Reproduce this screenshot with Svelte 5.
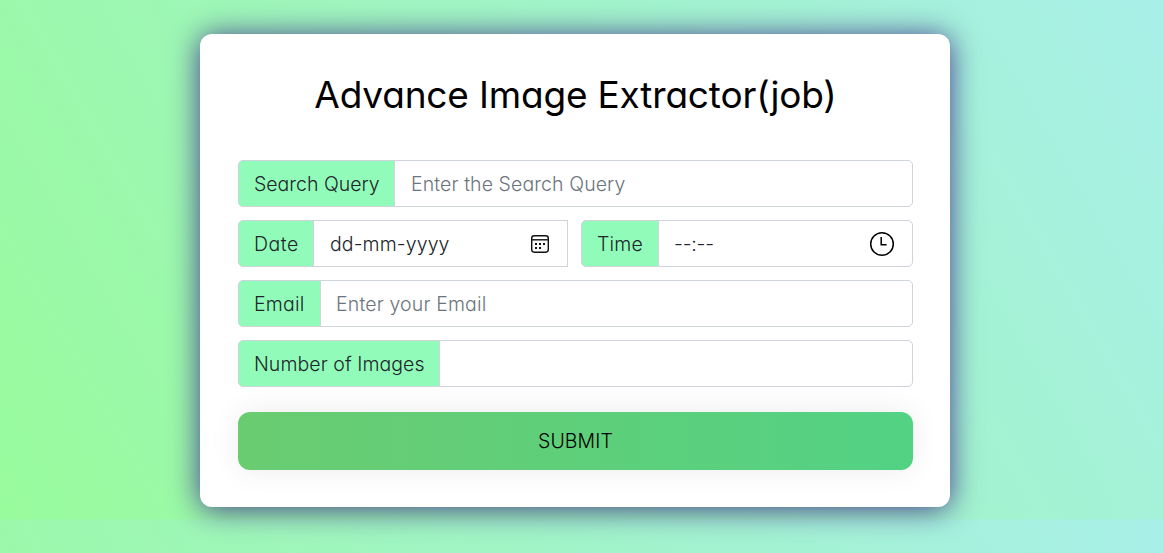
<script>
  let query = $state('');
  let email = $state('');
  let count = $state('');
</script>

<main class="page">
  <form class="card" onsubmit={(e) => e.preventDefault()}>
    <h1>Advance Image Extractor(job)</h1>

    <div class="group">
      <label class="tag w-query" for="query">Search Query</label>
      <input id="query" class="field" placeholder="Enter the Search Query" bind:value={query} />
    </div>

    <div class="row">
      <div class="group">
        <span class="tag w-date">Date</span>
        <div class="field square picker">
          <span>dd-mm-yyyy</span>
          <svg class="calendar" width="20" height="20" viewBox="0 0 20 20" fill="none" stroke="#111">
            <rect x="1.7" y="1.8" width="16.6" height="16.4" rx="2.6" stroke-width="1.4" />
            <path d="M1.7 5.8h16.6" stroke-width="1.4" />
            <path d="M5 10h2m2 0h2m2 0h2M5 14h2m2 0h2" stroke-width="2" />
          </svg>
        </div>
      </div>
      <div class="group">
        <span class="tag w-time">Time</span>
        <div class="field picker time">
          <span>--:--</span>
          <svg class="clock" width="26" height="26" viewBox="0 0 26 26" fill="none" stroke="#000">
            <circle cx="13" cy="13" r="11.3" stroke-width="1.5" />
            <path d="M12.2 6v7.8h5.4" stroke-width="1.5" />
          </svg>
        </div>
      </div>
    </div>

    <div class="group">
      <label class="tag w-email" for="email">Email</label>
      <input id="email" class="field email" placeholder="Enter your Email" bind:value={email} />
    </div>

    <div class="group">
      <label class="tag w-count" for="count">Number of Images</label>
      <input id="count" class="field" bind:value={count} />
    </div>

    <button type="submit">SUBMIT</button>
  </form>
</main>

<style>
  :global(body) {
    margin: 0;
  }
  .page,
  .page * {
    box-sizing: border-box;
  }
  .page {
    height: 553px;
    padding-top: 34px;
    overflow: hidden;
    background: linear-gradient(60deg, #98fb9c, #a8efe8) 0 0 / 100% 519.5px repeat-y;
    font-family: Inter, "Open Sans", sans-serif;
    font-feature-settings: "cv11";
    font-weight: 300;
    font-size: 19.5px;
    letter-spacing: 0.06px;
    color: #212529;
  }
  .card {
    width: 750px;
    height: 473px;
    margin-left: 200px;
    padding: 38px 37px 37px 38px;
    background: #fff;
    border-radius: 12px;
    box-shadow: 0 2px 30px #43398f;
  }
  h1 {
    margin: 0 0 42px;
    height: 46px;
    line-height: 46px;
    font-size: 37px;
    font-weight: 400;
    letter-spacing: -0.18px;
    color: #000;
    text-align: center;
    white-space: nowrap;
  }
  .group {
    display: flex;
    flex: 1;
    height: 47px;
    margin-bottom: 13px;
  }
  .row {
    display: grid;
    grid-template-columns: 330px 332px;
    gap: 13px;
  }
  .tag {
    flex: none;
    padding-left: 15px;
    line-height: 47px;
    white-space: nowrap;
    border: 1px solid #ced4da;
    border-radius: 5px 0 0 5px;
    background: #91fcb9;
  }
  .w-query { width: 157px; letter-spacing: 0; }
  .w-date { width: 76px; letter-spacing: 0.5px; }
  .w-time { width: 78px; letter-spacing: 0.2px; }
  .w-email { width: 83px; letter-spacing: 0.2px; }
  .w-count { width: 202px; }
  .field {
    flex: 1;
    min-width: 0;
    height: 47px;
    margin-left: -1px;
    padding: 0 16px;
    font: inherit;
    font-feature-settings: inherit;
    letter-spacing: 0.1px;
    color: inherit;
    background: #fff;
    border: 1px solid #ced4da;
    border-radius: 0 5px 5px 0;
    outline: none;
  }
  .field::placeholder {
    color: #6c757d;
    opacity: 1;
  }
  .email {
    padding-left: 15px;
    letter-spacing: 0.15px;
  }
  .time {
    padding-left: 15px;
    letter-spacing: -0.2px;
  }
  .square {
    border-radius: 0;
  }
  .picker {
    display: flex;
    align-items: center;
    justify-content: space-between;
  }
  .calendar,
  .clock {
    margin-right: 1px;
  }
  button {
    display: block;
    width: 100%;
    height: 58px;
    margin-top: 25px;
    padding: 0;
    border: 0;
    border-radius: 12px;
    background: linear-gradient(to right, #6acc71, #53d284);
    box-shadow: 0 0 30px rgba(0, 0, 0, 0.08);
    font: inherit;
    font-feature-settings: inherit;
    letter-spacing: 0.1px;
    color: #000;
  }
</style>
